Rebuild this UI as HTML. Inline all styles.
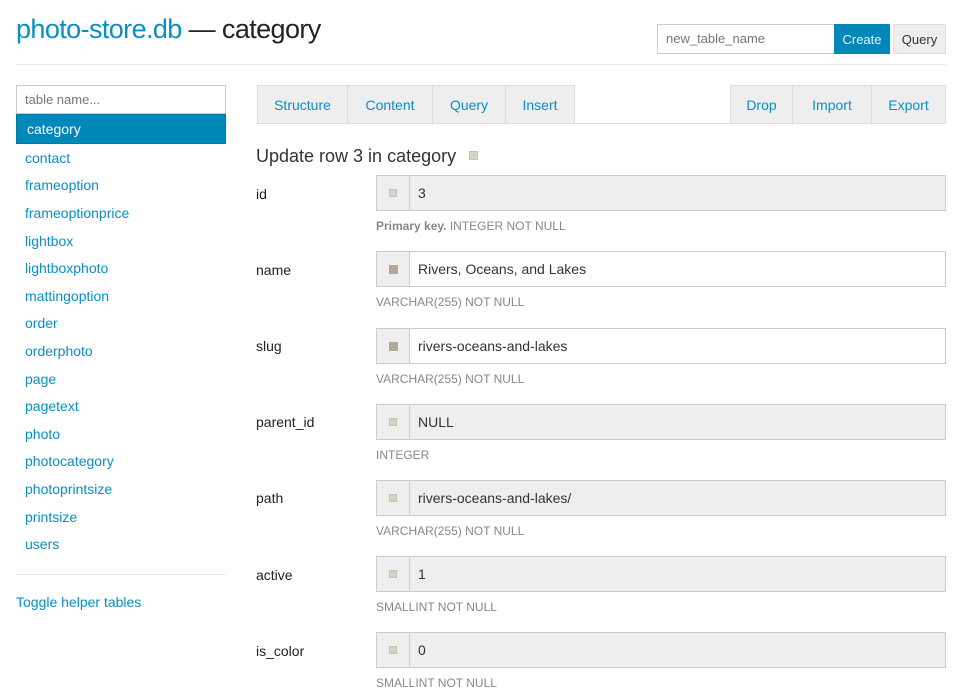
<!DOCTYPE html>
<html><head><style>
*{box-sizing:border-box;margin:0;padding:0}
body{width:960px;height:696px;overflow:hidden;background:#fff;font-family:"Liberation Sans",sans-serif;color:#222;position:relative}
.a{position:absolute}
h1{position:absolute;left:16px;top:14px;font-size:27px;font-weight:normal;color:#222;letter-spacing:-0.6px}
h1 span{color:#0a8fc0}
.hr{position:absolute;height:1px;background:#eeece6}
.inp{position:absolute;border:1px solid #ccc;background:#fff;font-size:13px;color:#777;padding-left:8px}
.btn{position:absolute;font-size:13px;display:flex;align-items:center;justify-content:center}
.side a{position:absolute;left:25px;font-size:14px;color:#0a8fc0;text-decoration:none}
.tab{position:absolute;top:85px;height:39px;background:#eee;border:1px solid #ddd;color:#0a8fc0;font-size:14px;display:flex;align-items:center;justify-content:center}
.lbl{position:absolute;left:256px;font-size:14px;color:#222}
.fld{position:absolute;left:376px;width:570px;height:36px;border:1px solid #ccc;background:#eee;display:flex}
.fld .ad{width:33px;border-right:1px solid #ccc;display:flex;align-items:center;justify-content:center;background:#eee}
.fld .ad i{width:8px;height:8px;background:#d8d3c9;border:1px solid #c8c2b5}
.fld .ad i.d{width:9px;height:9px;background:#b0a898;border:none}
.fld .v{padding-left:8px;font-size:14px;color:#333;display:flex;align-items:center}
.fld.w{background:#fff}
.help{position:absolute;left:376px;font-size:12px;color:#888}
</style></head><body>
<h1><span>photo-store.db</span> — category</h1>
<div class="inp" style="left:657px;top:24px;width:178px;height:30px;line-height:28px">new_table_name</div>
<div class="btn" style="left:834px;top:24px;width:56px;height:30px;background:#0088b8;color:#e8f4fa">Create</div>
<div class="btn" style="left:893px;top:24px;width:53px;height:30px;background:#eee;border:1px solid #ddd;color:#333">Query</div>
<div class="hr" style="left:16px;top:64px;width:930px"></div>

<div class="inp" style="left:16px;top:85px;width:210px;height:29px;line-height:27px">table name...</div>
<div class="a" style="left:16px;top:114px;width:210px;height:30px;background:#0088b8;border:1px solid #0079a5;color:#fff;font-size:14px;line-height:28px;padding-left:10px">category</div>
<div class="side">
<a style="top:150px">contact</a><a style="top:177px">frameoption</a><a style="top:205px">frameoptionprice</a><a style="top:233px">lightbox</a><a style="top:260px">lightboxphoto</a><a style="top:288px">mattingoption</a><a style="top:315px">order</a><a style="top:343px">orderphoto</a><a style="top:371px">page</a><a style="top:398px">pagetext</a><a style="top:426px">photo</a><a style="top:453px">photocategory</a><a style="top:481px">photoprintsize</a><a style="top:509px">printsize</a><a style="top:536px">users</a>
<a style="top:594px;left:16px">Toggle helper tables</a>
</div>
<div class="hr" style="left:16px;top:574px;width:210px"></div>

<div class="hr" style="left:256px;top:123px;width:690px;background:#ddd"></div>
<div class="tab" style="left:257px;width:91px">Structure</div>
<div class="tab" style="left:347px;width:86px">Content</div>
<div class="tab" style="left:432px;width:74px">Query</div>
<div class="tab" style="left:505px;width:70px">Insert</div>
<div class="tab" style="left:730px;width:63px">Drop</div>
<div class="tab" style="left:792px;width:80px">Import</div>
<div class="tab" style="left:871px;width:75px">Export</div>

<div class="a" style="left:256px;top:146px;font-size:18px;color:#333">Update row 3 in category <span style="display:inline-block;width:9px;height:9px;background:#d8d3c9;border:1px solid #c8c2b5;margin-left:8px;vertical-align:2px"></span></div>

<div class="lbl" style="top:186px">id</div>
<div class="fld" style="top:175px"><div class="ad"><i></i></div><div class="v">3</div></div>
<div class="help" style="top:219px"><b>Primary key.</b> INTEGER NOT NULL</div>

<div class="lbl" style="top:262px">name</div>
<div class="fld w" style="top:251px"><div class="ad"><i class="d"></i></div><div class="v">Rivers, Oceans, and Lakes</div></div>
<div class="help" style="top:295px">VARCHAR(255) NOT NULL</div>

<div class="lbl" style="top:338px">slug</div>
<div class="fld w" style="top:328px"><div class="ad"><i class="d"></i></div><div class="v">rivers-oceans-and-lakes</div></div>
<div class="help" style="top:372px">VARCHAR(255) NOT NULL</div>

<div class="lbl" style="top:414px">parent_id</div>
<div class="fld" style="top:404px"><div class="ad"><i></i></div><div class="v">NULL</div></div>
<div class="help" style="top:448px">INTEGER</div>

<div class="lbl" style="top:490px">path</div>
<div class="fld" style="top:480px"><div class="ad"><i></i></div><div class="v">rivers-oceans-and-lakes/</div></div>
<div class="help" style="top:524px">VARCHAR(255) NOT NULL</div>

<div class="lbl" style="top:567px">active</div>
<div class="fld" style="top:556px"><div class="ad"><i></i></div><div class="v">1</div></div>
<div class="help" style="top:600px">SMALLINT NOT NULL</div>

<div class="lbl" style="top:643px">is_color</div>
<div class="fld" style="top:632px"><div class="ad"><i></i></div><div class="v">0</div></div>
<div class="help" style="top:676px">SMALLINT NOT NULL</div>
</body></html>
